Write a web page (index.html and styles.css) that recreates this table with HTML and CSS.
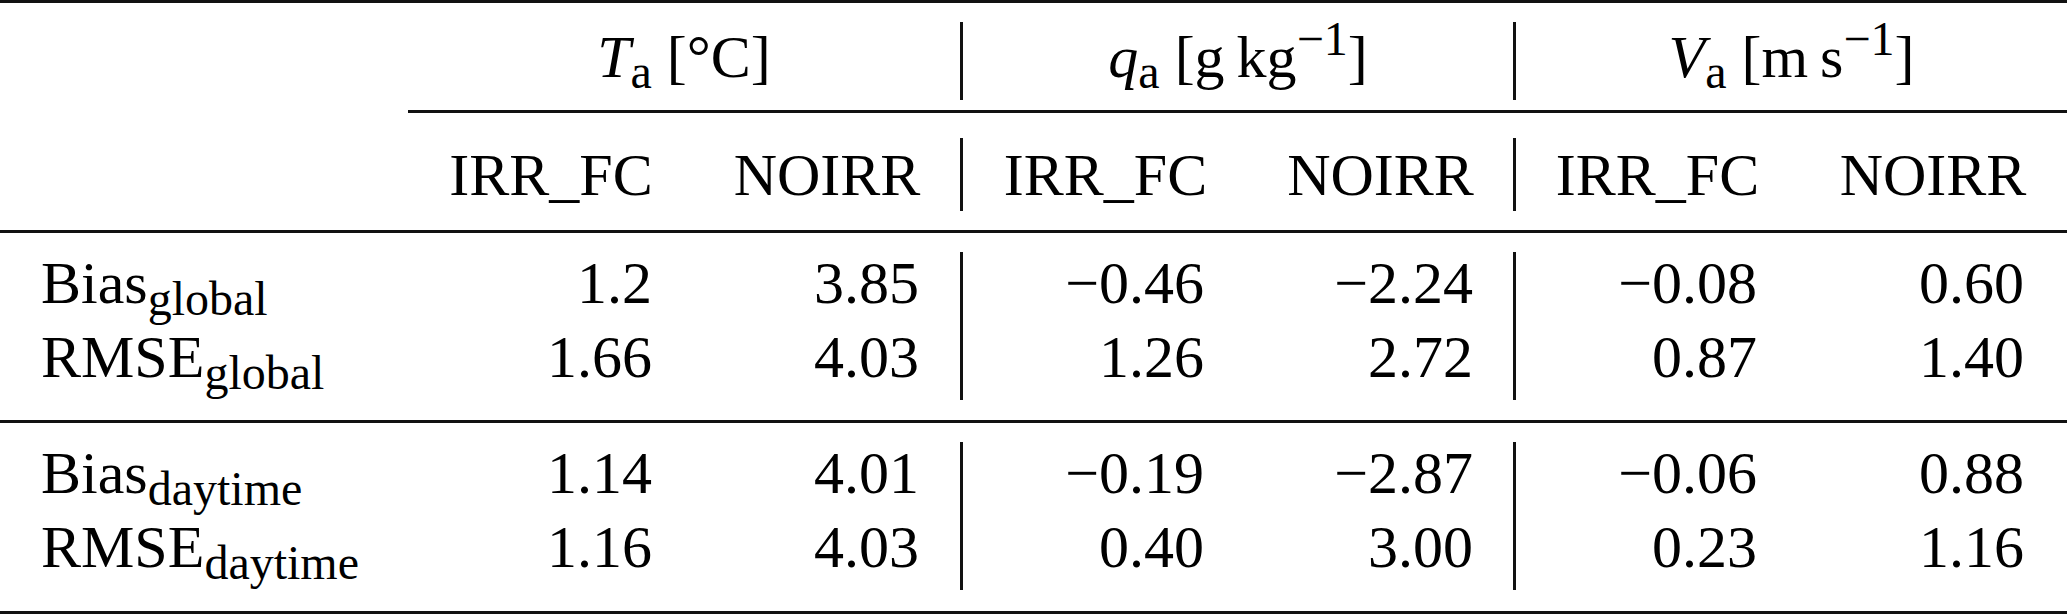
FILE: index.html
```html
<!DOCTYPE html>
<html lang="en">
<head>
<meta charset="utf-8">
<title>Table</title>
<link rel="stylesheet" href="styles.css">
</head>
<body>
<table class="tbl">
  <colgroup>
    <col class="w0"><col class="w1"><col class="w2"><col class="w3"><col class="w4"><col class="w5"><col class="w6">
  </colgroup>
  <tbody>
    <tr class="rule rule-top"><td colspan="7"><div class="line"></div></td></tr>
    <tr class="hrow1">
      <td class="stub"></td>
      <td colspan="2" class="bar"><span class="var">T</span><span class="sub">a</span> [°C]</td>
      <td colspan="2" class="bar"><span class="var">q</span><span class="sub">a</span> [g&#8201;kg<span class="sup">−1</span>]</td>
      <td colspan="2"><span class="var">V</span><span class="sub">a</span> [m&#8201;s<span class="sup">−1</span>]</td>
    </tr>
    <tr class="rule rule-cmid"><td></td><td colspan="6"><div class="line"></div></td></tr>
    <tr class="hrow2">
      <td class="stub"></td>
      <td>IRR_FC</td><td class="bar">NOIRR</td>
      <td>IRR_FC</td><td class="bar">NOIRR</td>
      <td>IRR_FC</td><td>NOIRR</td>
    </tr>
    <tr class="rule rule-mid"><td colspan="7"><div class="line"></div></td></tr>
    <tr class="drow">
      <td class="stub">Bias<span class="sub">global</span></td>
      <td class="c1">1.2</td><td class="c2 bar">3.85</td>
      <td class="c3">−0.46</td><td class="c4 bar">−2.24</td>
      <td class="c5">−0.08</td><td class="c6">0.60</td>
    </tr>
    <tr class="drow">
      <td class="stub">RMSE<span class="sub">global</span></td>
      <td class="c1">1.66</td><td class="c2 bar">4.03</td>
      <td class="c3">1.26</td><td class="c4 bar">2.72</td>
      <td class="c5">0.87</td><td class="c6">1.40</td>
    </tr>
    <tr class="rule rule-sep"><td colspan="7"><div class="line"></div></td></tr>
    <tr class="drow">
      <td class="stub">Bias<span class="sub">daytime</span></td>
      <td class="c1">1.14</td><td class="c2 bar">4.01</td>
      <td class="c3">−0.19</td><td class="c4 bar">−2.87</td>
      <td class="c5">−0.06</td><td class="c6">0.88</td>
    </tr>
    <tr class="drow">
      <td class="stub">RMSE<span class="sub">daytime</span></td>
      <td class="c1">1.16</td><td class="c2 bar">4.03</td>
      <td class="c3">0.40</td><td class="c4 bar">3.00</td>
      <td class="c5">0.23</td><td class="c6">1.16</td>
    </tr>
    <tr class="rule rule-bot"><td colspan="7"><div class="line"></div></td></tr>
  </tbody>
</table>
</body>
</html>
```

FILE: styles.css
```css
html, body {
  margin: 0;
  padding: 0;
  background: #fff;
}

body {
  width: 2067px;
  height: 614px;
  overflow: hidden;
}

.tbl {
  border-collapse: separate;
  border-spacing: 0;
  table-layout: fixed;
  width: 2067px;
  font-family: "Liberation Serif", "Times New Roman", serif;
  font-size: 60px;
  color: #000;
}

.w0 { width: 408px; }
.w1 { width: 286px; }
.w2 { width: 269px; }
.w3 { width: 285px; }
.w4 { width: 268px; }
.w5 { width: 283px; }
.w6 { width: 268px; }

.tbl td {
  padding: 0;
  vertical-align: top;
  line-height: 60px;
  white-space: nowrap;
  box-sizing: content-box;
}

/* horizontal rules */
.rule td {
  font-size: 0;
  line-height: 0;
}

.line {
  height: 3px;
  background: #111;
}

.rule-top .line { margin: 0 0 19px; }
.rule-cmid .line { margin: 10px 0 25px; }
.rule-mid .line { margin: 19px 0; }
.rule-sep .line { margin: 20px 0 19px; }
.rule-bot .line { margin: 21px 0 0; }

/* vertical separators */
.bar {
  border-right: 3px solid #111;
}

/* header rows */
.hrow1 td {
  height: 73px;
  padding-top: 5px;
  text-align: center;
}

.hrow2 td {
  height: 66px;
  padding-top: 7px;
  text-align: center;
}

/* data rows */
.drow td {
  height: 73px;
  padding-top: 1px;
  text-align: right;
}

.tbl .stub {
  text-align: left;
  padding-left: 41px;
}

.c1 { padding-right: 42px !important; }
.c2 { padding-right: 41px !important; }
.c3 { padding-right: 44px !important; }
.c4 { padding-right: 40px !important; }
.c5 { padding-right: 42px !important; }
.c6 { padding-right: 43px !important; }

.var {
  font-style: italic;
}

.sub {
  font-size: 48px;
  line-height: 0;
  vertical-align: -11px;
}

.stub .sub {
  vertical-align: -12px;
}

.sup {
  font-size: 48px;
  line-height: 0;
  vertical-align: 22px;
}
```
